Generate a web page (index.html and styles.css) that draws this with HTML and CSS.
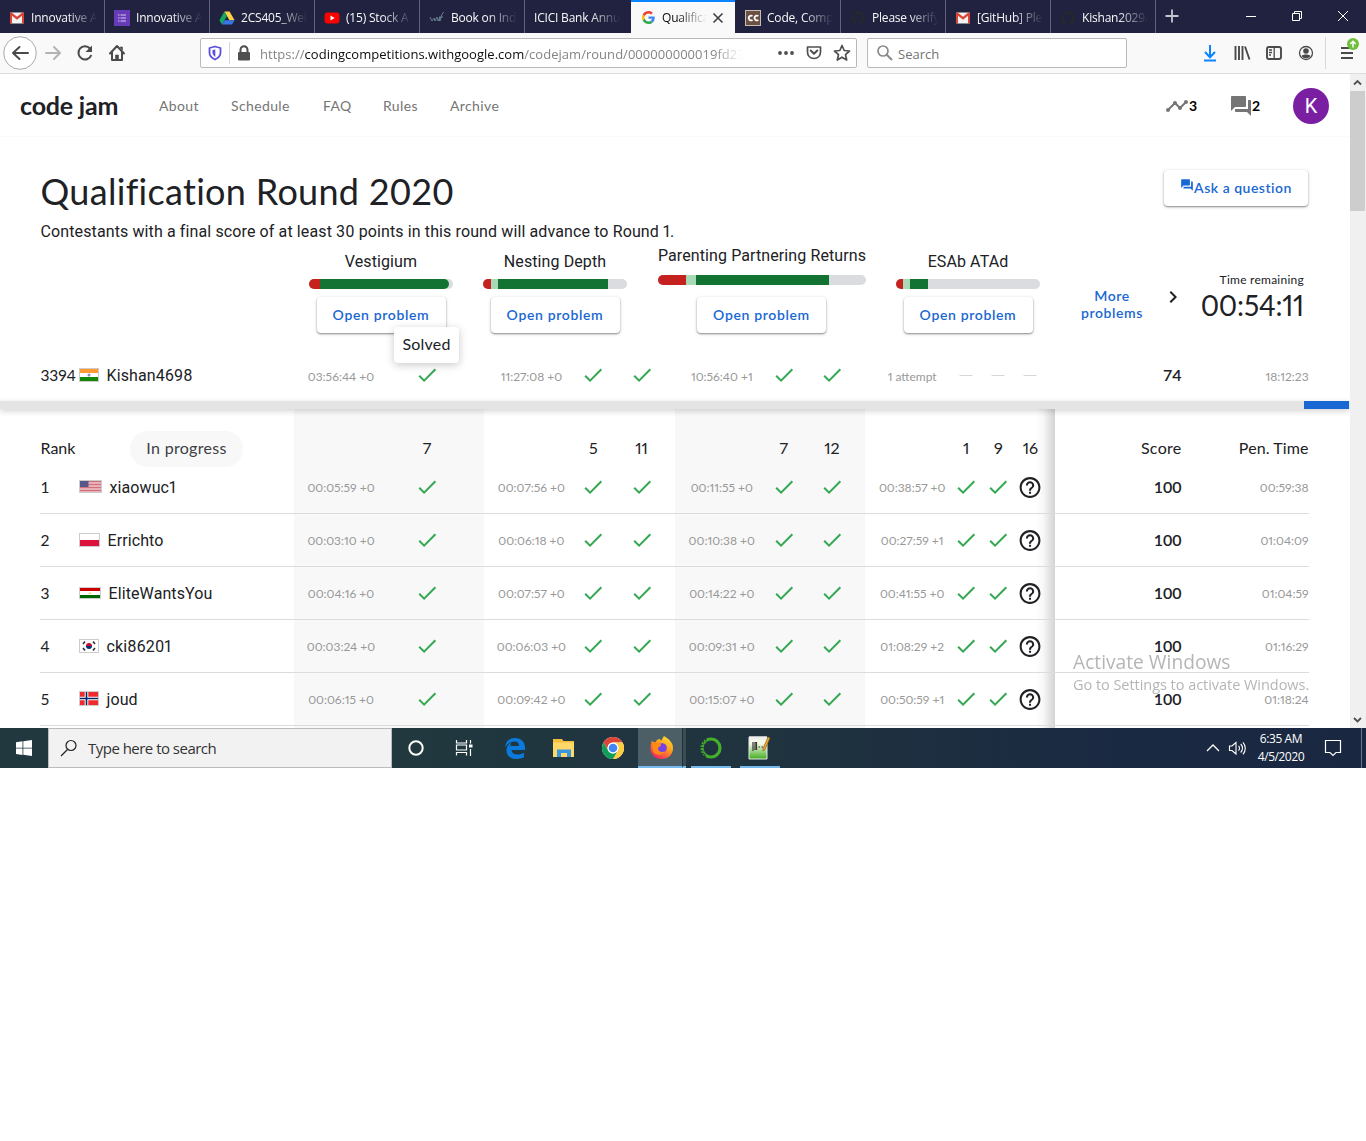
FILE: index.html
```html
<!DOCTYPE html>
<html lang="en">
<head>
<meta charset="utf-8">
<title>Qualification Round 2020 - Code Jam</title>
<link rel="stylesheet" href="styles.css">
</head>
<body>
<svg class="defs" width="0" height="0">
  <linearGradient id="g-fox" x1="0.8" y1="0" x2="0.2" y2="1"><stop offset="0" stop-color="#ffe22e"/><stop offset=".45" stop-color="#ff9a1f"/><stop offset="1" stop-color="#f5156c"/></linearGradient>
  <linearGradient id="g-note" x1="0" y1="0" x2="0" y2="1"><stop offset="0.3" stop-color="#f4f8e8"/><stop offset="1" stop-color="#3fae1d"/></linearGradient>
  <symbol id="check" viewBox="0 0 24 24"><path d="M9 16.17 4.83 12l-1.42 1.41L9 19 21 7l-1.41-1.41z" fill="#34a853"/></symbol>
  <symbol id="dash" viewBox="0 0 24 24"><path d="M5.5 12.500h13" stroke="#d5d7da"/></symbol>
  <symbol id="help" viewBox="0 0 24 24"><path d="M11 18h2v-2h-2v2zm1-16C6.48 2 2 6.48 2 12s4.48 10 10 10 10-4.480 10-10S17.520 2 12 2zm0 18c-4.410 0-8-3.590-8-8s3.590-8 8-8 8 3.590 8 8-3.590 8-8 8zm0-14c-2.210 0-4 1.790-4 4h2c0-1.100.9-2 2-2s2 .9 2 2c0 2-3 1.750-3 5h2c0-2.250 3-2.500 3-5 0-2.210-1.790-4-4-4z" fill="#202124"/></symbol>
  <symbol id="forum" viewBox="0 0 24 24"><path d="M21 6h-2v9H6v2c0 .55.45 1 1 1h11l4 4V7c0-.55-.45-1-1-1zm-4 6V3c0-.55-.45-1-1-1H3c-.55 0-1 .45-1 1v14l4-4h10c.55 0 1-.45 1-1z" fill="currentColor"/></symbol>
  <symbol id="gmail" viewBox="0 0 16 16"><path d="M1.500 2.500h13v11h-13z" fill="#f2f2f2"/><path d="M1 3v10.500h2V5.800l5 4 5-4v7.700h2V3c0-.9-1-1-1.600-.6L8 6.800 2.600 2.400C2 2 1 2.100 1 3z" fill="#db4437"/></symbol>
  <symbol id="github" viewBox="0 0 16 16"><path d="M8 1.300a6.700 6.700 0 0 0-2.100 13c.3 0 .5-.1.500-.4v-1.300c-1.900.4-2.300-.9-2.300-.9-.6-1.500-1.100-1-1.100-1.300.8-.1 1.300.8 1.300.8.7 1 1.700.8 2 .6 0-.5.300-.8.500-1C5.300 10.600 3.700 10 3.700 7.500c0-.7.3-1.300.7-1.800-.1-.2-.3-.9.100-1.800 0 0 .6-.2 1.900.7a6 6 0 0 1 3.300 0c1.300-.9 1.900-.7 1.900-.7.4.9.1 1.600.1 1.800.4.500.7 1.100.7 1.800 0 2.500-1.600 3.100-3.100 3.300.3.200.5.600.5 1.300v1.800c0 .300.1.4.5.4A6.700 6.700 0 0 0 8 1.300z" fill="#24292e"/></symbol>
</svg>

<header class="tabs">
  <div class="tab"><svg width="16" height="16"><use href="#gmail"/></svg><span class="tab-title">Innovative A</span></div>
  <div class="tab"><svg width="16" height="16"><path d="M0 0h16v16H0z" fill="#673ab7"/><path d="M4 5h1.500M4 8h1.500M4 11h1.500M6.500 5H12M6.500 8H12M6.500 11H12" stroke="#d9ccf0" stroke-width="1.200"/></svg><span class="tab-title">Innovative A</span></div>
  <div class="tab"><svg width="16" height="16"><path d="M5.400 1.500h5.200l5 8.700h-5.200z" fill="#ffcf48"/><path d="M5.400 1.500 8 6 3 14.600.4 10.200z" fill="#11a861"/><path d="M5.600 10.200h10L13 14.600H3z" fill="#3777e3"/></svg><span class="tab-title">2CS405_Web</span></div>
  <div class="tab"><svg width="16" height="16"><rect x=".5" y="2.500" width="15" height="11" rx="3" fill="#f00"/><path d="m6.500 5.500 4.200 2.500-4.200 2.500z" fill="#fff"/></svg><span class="tab-title">(15) Stock A</span></div>
  <div class="tab"><svg width="16" height="16"><path d="m1 7 2 4 2-3 1 3 2-4 1 4 2-4-.5 4M11 11l2-7 2-2M10 7h4" fill="none" stroke="#78909c" stroke-width=".8"/></svg><span class="tab-title">Book on Ind</span></div>
  <div class="tab wider"><span class="tab-title">ICICI Bank Annua</span></div>
  <div class="tab active"><svg width="13" height="13" viewBox="0 0 48 48"><path fill="#EA4335" d="M24 9.500c3.540 0 6.710 1.220 9.210 3.600l6.850-6.850C35.900 2.380 30.470 0 24 0 14.620 0 6.510 5.380 2.560 13.220l7.980 6.190C12.430 13.720 17.740 9.500 24 9.500z"/><path fill="#4285F4" d="M46.980 24.550c0-1.570-.15-3.090-.38-4.550H24v9.020h12.940c-.58 2.960-2.260 5.480-4.780 7.180l7.730 6c4.510-4.180 7.090-10.360 7.090-17.650z"/><path fill="#FBBC05" d="M10.530 28.590A14.500 14.500 0 0 1 9.770 24c0-1.600.27-3.140.76-4.590l-7.980-6.190A23.900 23.900 0 0 0 0 24c0 3.880.92 7.540 2.560 10.780z"/><path fill="#34A853" d="M24 48c6.480 0 11.930-2.130 15.890-5.810l-7.730-6c-2.150 1.450-4.920 2.300-8.160 2.300-6.260 0-11.570-4.220-13.470-9.910l-7.980 6.190C6.510 42.620 14.620 48 24 48z"/></svg><span class="tab-title">Qualification</span><svg class="close" width="12" height="12"><path d="m1.500 1.500 9 9m0-9-9 9" stroke="#3a3a3a" stroke-width="1.500"/></svg></div>
  <div class="tab wider after"><svg width="16" height="16"><rect x=".5" y=".5" width="15" height="15" fill="#6b5143" stroke="#c9bcb0"/><path d="M7.500 6a2.400 2.400 0 1 0 0 4M13.300 6a2.400 2.400 0 1 0 0 4" fill="none" stroke="#fff" stroke-width="1.700"/></svg><span class="tab-title">Code, Compi</span></div>
  <div class="tab"><svg width="16" height="16"><use href="#github"/></svg><span class="tab-title">Please verify</span></div>
  <div class="tab"><svg width="16" height="16"><use href="#gmail"/></svg><span class="tab-title">[GitHub] Plea</span></div>
  <div class="tab"><svg width="16" height="16"><use href="#github"/></svg><span class="tab-title">Kishan2029/</span></div>
  <svg class="newtab" width="33" height="33"><path d="M16 9.500v13M9.500 16h13" stroke="#c6c6cf" stroke-width="1.800"/></svg>
  <div class="winbtns">
    <svg width="46" height="33"><path d="M18 16.500h10" stroke="#fff"/></svg>
    <svg width="46" height="33"><path d="M18.500 13.500h7v7h-7zM20.500 13.500v-2h7v7h-2" fill="none" stroke="#fff"/></svg>
    <svg width="46" height="33"><path d="m18 11 10 10m0-10-10 10" stroke="#fff"/></svg>
  </div>
</header>

<div class="toolbar">
  <div class="navbtns">
    <svg width="34" height="34"><circle cx="17" cy="17" r="16.300" fill="#fff" stroke="#a9a9aa"/><path d="M25 17H10m6.500-6L10 17l6.500 6" fill="none" stroke="#4a4a4b" stroke-width="2" stroke-linecap="round" stroke-linejoin="round"/></svg>
    <svg width="32" height="34"><path d="M9 17h14m-6-6 6 6-6 6" fill="none" stroke="#b3b3b4" stroke-width="2" stroke-linecap="round" stroke-linejoin="round"/></svg>
    <svg width="32" height="34"><path d="M21 12.500A6.600 6.600 0 1 0 22.300 19" fill="none" stroke="#4a4a4b" stroke-width="2"/><path d="M23 9.500v6.500h-6.500z" fill="#4a4a4b"/></svg>
    <svg width="32" height="34"><path d="m9 17.500 7-7.500 7 7.500M11 16v8h10v-8" fill="none" stroke="#4a4a4b" stroke-width="2" stroke-linejoin="round" stroke-linecap="round"/><path d="M14.500 24v-5h3v5M19 11h2.500v3z" fill="#4a4a4b" stroke="#4a4a4b" stroke-width=".6"/></svg>
  </div>
  <div class="urlbar">
    <svg width="28" height="24"><path d="M14 5.500 19.500 7v4.500c0 3.300-2.500 5.700-5.500 7-3-1.300-5.500-3.700-5.500-7V7z" fill="none" stroke="#5a4fe0" stroke-width="1.800" stroke-linejoin="round"/><path d="M14.300 8.500 11.500 9v2.500c0 2 1.200 3.300 2.800 4.400z" fill="#5a4fe0"/></svg>
    <i class="sep"></i>
    <svg width="27" height="24"><rect x="8" y="11" width="12" height="8.500" rx="1.200" fill="#4f4f50"/><path d="M10.500 11.500V8.700a3.500 3.500 0 0 1 7 0v2.800" fill="none" stroke="#4f4f50" stroke-width="2"/></svg>
    <div class="url">https://<b>codingcompetitions.withgoogle.com</b>/codejam/round/000000000019fd27</div>
    <svg width="101" height="28"><g fill="#4f4f50"><circle cx="25" cy="14" r="1.900"/><circle cx="31" cy="14" r="1.900"/><circle cx="37" cy="14" r="1.900"/></g><path d="M52.500 8h13v5c0 4-2.800 6.500-6.500 6.500s-6.500-2.500-6.500-6.500z" fill="none" stroke="#4f4f50" stroke-width="1.700" stroke-linejoin="round"/><path d="m55.700 11.500 3.300 3.200 3.300-3.200" fill="none" stroke="#4f4f50" stroke-width="2" stroke-linecap="round" stroke-linejoin="round"/><path d="m87 6.500 2.200 5 5.300.500-4 3.600 1.200 5.400-4.700-2.800-4.700 2.800 1.200-5.400-4-3.600 5.300-.5z" fill="none" stroke="#4f4f50" stroke-width="1.700" stroke-linejoin="round"/></svg>
  </div>
  <div class="searchbar"><svg width="18" height="18"><circle cx="7" cy="7" r="5" fill="none" stroke="#8a8a8b" stroke-width="1.700"/><path d="m10.500 10.500 5.500 5.500" stroke="#8a8a8b" stroke-width="2"/></svg><span>Search</span></div>
  <div class="tools">
    <svg width="32" height="32"><path d="M16 8v12m-5-5 5 5.300L21 15M10 23.500h12" fill="none" stroke="#0a84ff" stroke-width="2"/></svg>
    <svg width="32" height="32"><path d="M9.500 9v14M13 9v14M16.500 9v14M19 9.500l4.500 13" fill="none" stroke="#4a4a4b" stroke-width="1.900"/></svg>
    <svg width="32" height="32"><rect x="9" y="10" width="14" height="12" rx="2" fill="none" stroke="#4a4a4b" stroke-width="1.900"/><path d="M16.200 10v12M11 13h3M11 15.500h3M11 18h2" stroke="#4a4a4b" stroke-width="1.300"/></svg>
    <svg width="32" height="32"><circle cx="16" cy="16" r="6.500" fill="none" stroke="#4a4a4b" stroke-width="1.300"/><circle cx="16" cy="14" r="2.800" fill="#4a4a4b"/><path d="M11.500 19c1-2 8-2 9 0-1.500 3-7.500 3-9 0z" fill="#4a4a4b"/></svg>
    <i class="sep tall"></i>
    <svg width="40" height="34"><path d="M15 12h8M15 17h12M15 22h12" stroke="#4a4a4b" stroke-width="2"/><circle cx="27" cy="8" r="6" fill="#6fbf3c"/><path d="M27 11.500V5.500m-2.700 2.500L27 5.300 29.700 8" fill="none" stroke="#fff" stroke-width="1.500"/></svg>
  </div>
</div>

<div class="viewport">
  <main class="page">
    <nav class="sitenav">
      <a class="logo">code jam</a>
      <a class="n-about">About</a><a class="n-schedule">Schedule</a><a class="n-faq">FAQ</a><a class="n-rules">Rules</a><a class="n-archive">Archive</a>
      <div class="status">
        <svg width="24" height="24" viewBox="0 0 24 24"><path d="M23 8c0 1.100-.9 2-2 2-.18 0-.35-.02-.51-.07l-3.560 3.550c.05.16.07.34.07.52 0 1.100-.9 2-2 2s-2-.9-2-2c0-.18.02-.36.07-.52l-2.550-2.550c-.16.050-.34.070-.52.070s-.36-.02-.52-.07l-4.550 4.560c.05.160.070.330.070.510 0 1.100-.9 2-2 2s-2-.9-2-2 .9-2 2-2c.18 0 .35.020.51.070l4.560-4.550C8.020 9.360 8 9.180 8 9c0-1.100.9-2 2-2s2 .9 2 2c0 .18-.02.36-.07.52l2.550 2.550c.16-.050.34-.070.52-.070s.36.020.52.070l3.550-3.560C19.020 8.350 19 8.180 19 8c0-1.100.9-2 2-2s2 .9 2 2z" fill="#757575"/></svg><b>3</b>
        <svg class="chat" width="24" height="24"><use href="#forum"/></svg><b>2</b>
        <span class="avatar">K</span>
      </div>
    </nav>

    <section class="intro">
      <div>
        <h1>Qualification Round 2020</h1>
        <p>Contestants with a final score of at least 30 points in this round will advance to Round 1.</p>
      </div>
      <button class="btn ask"><svg width="14" height="14"><use href="#forum"/></svg><span>Ask a question</span></button>
    </section>

    <section class="problems">
      <article class="problem"><h2>Vestigium</h2><div class="meter"><i class="bad" style="width:11px"></i><i class="good round" style="width:129px"></i></div><button class="btn">Open problem</button><span class="tip">Solved</span></article>
      <article class="problem"><h2>Nesting Depth</h2><div class="meter"><i class="bad" style="width:8px"></i><i class="part" style="width:7px"></i><i class="good" style="width:110px"></i></div><button class="btn">Open problem</button></article>
      <article class="problem wide"><h2>Parenting Partnering Returns</h2><div class="meter"><i class="bad" style="width:28px"></i><i class="part" style="width:10px"></i><i class="good" style="width:133px"></i></div><button class="btn">Open problem</button></article>
      <article class="problem"><h2>ESAb ATAd</h2><div class="meter"><i class="bad" style="width:7px"></i><i class="part" style="width:7px"></i><i class="good" style="width:18px"></i></div><button class="btn">Open problem</button></article>
      <a class="more">More<br>problems</a>
      <svg class="next" width="24" height="24" viewBox="0 0 24 24"><path d="M10 6 8.590 7.410 13.170 12l-4.580 4.590L10 18l6-6z" fill="#202124"/></svg>
      <div class="clock"><small>Time remaining</small><strong>00:54:11</strong></div>
    </section>

    <div class="row self">
      <div class="who"><span class="rank">3394</span><svg class="flag" width="20" height="14"><path d="M0 0h20v14H0z" fill="#fff"/><path d="M0 0h20v5H0z" fill="#ff9933"/><path d="M0 9h20v5H0z" fill="#138808"/><circle cx="10" cy="7" r="1.500" fill="#8a8ad0"/></svg><span class="name">Kishan4698</span></div>
      <div class="cell"><time>03:56:44 +0</time><svg><use href="#check"/></svg></div>
      <div class="cell"><time>11:27:08 +0</time><svg><use href="#check"/></svg><svg><use href="#check"/></svg></div>
      <div class="cell"><time>10:56:40 +1</time><svg><use href="#check"/></svg><svg><use href="#check"/></svg></div>
      <div class="cell"><time>1 attempt</time><svg><use href="#dash"/></svg><svg><use href="#dash"/></svg><svg><use href="#dash"/></svg></div>
      <b class="score">74</b><time class="pen">18:12:23</time>
    </div>
    <div class="timeline"><i></i></div>

    <section class="board">
      <div class="row head">
        <div class="who"><span class="rank">Rank</span><span class="pill">In progress</span></div>
        <div class="cell"><time></time><span>7</span></div>
        <div class="cell"><time></time><span>5</span><span>11</span></div>
        <div class="cell"><time></time><span>7</span><span>12</span></div>
        <div class="cell"><time></time><span>1</span><span>9</span><span>16</span></div>
        <span class="score">Score</span><span class="pen">Pen. Time</span>
      </div>
      <div class="row">
        <div class="who"><span class="rank">1</span><svg class="flag" width="23" height="13"><path d="M0 0h23v13H0z" fill="#f0c4ca"/><path d="M0 1.500h23M0 4.500h23M0 7.500h23M0 10.500h23" stroke="#d0707c" stroke-width="1.300"/><path d="M0 0h9.500v7H0z" fill="#56588a"/></svg><span class="name">xiaowuc1</span></div>
        <div class="cell"><time>00:05:59 +0</time><svg><use href="#check"/></svg></div>
        <div class="cell"><time>00:07:56 +0</time><svg><use href="#check"/></svg><svg><use href="#check"/></svg></div>
        <div class="cell"><time>00:11:55 +0</time><svg><use href="#check"/></svg><svg><use href="#check"/></svg></div>
        <div class="cell"><time>00:38:57 +0</time><svg><use href="#check"/></svg><svg><use href="#check"/></svg><svg><use href="#help"/></svg></div>
        <b class="score">100</b><time class="pen">00:59:38</time>
      </div>
      <div class="row">
        <div class="who"><span class="rank">2</span><svg class="flag" width="21" height="14"><path d="M0 0h21v14H0z" fill="#fff"/><path d="M0 7h21v7H0z" fill="#dc143c"/></svg><span class="name">Errichto</span></div>
        <div class="cell"><time>00:03:10 +0</time><svg><use href="#check"/></svg></div>
        <div class="cell"><time>00:06:18 +0</time><svg><use href="#check"/></svg><svg><use href="#check"/></svg></div>
        <div class="cell"><time>00:10:38 +0</time><svg><use href="#check"/></svg><svg><use href="#check"/></svg></div>
        <div class="cell"><time>00:27:59 +1</time><svg><use href="#check"/></svg><svg><use href="#check"/></svg><svg><use href="#help"/></svg></div>
        <b class="score">100</b><time class="pen">01:04:09</time>
      </div>
      <div class="row">
        <div class="who"><span class="rank">3</span><svg class="flag" width="22" height="12"><path d="M0 0h22v12H0z" fill="#fff"/><path d="M0 0h22v4H0z" fill="#c00"/><path d="M0 8h22v4H0z" fill="#060"/><path d="M9 7h4l-2-2z" fill="#f8dc75"/></svg><span class="name">EliteWantsYou</span></div>
        <div class="cell"><time>00:04:16 +0</time><svg><use href="#check"/></svg></div>
        <div class="cell"><time>00:07:57 +0</time><svg><use href="#check"/></svg><svg><use href="#check"/></svg></div>
        <div class="cell"><time>00:14:22 +0</time><svg><use href="#check"/></svg><svg><use href="#check"/></svg></div>
        <div class="cell"><time>00:41:55 +0</time><svg><use href="#check"/></svg><svg><use href="#check"/></svg><svg><use href="#help"/></svg></div>
        <b class="score">100</b><time class="pen">01:04:59</time>
      </div>
      <div class="row">
        <div class="who"><span class="rank">4</span><svg class="flag" width="20" height="14"><path d="M0 0h20v14H0z" fill="#fff"/><path d="M7 7a3 3 0 0 1 6 0z" fill="#c60c30"/><path d="M7 7a3 3 0 0 0 6 0z" fill="#003478"/><path d="m4 5 2-2.500M14 2.500 16 5M4 9l2 2.500M14 11.500 16 9" stroke="#333" stroke-width="1.600"/></svg><span class="name">cki86201</span></div>
        <div class="cell"><time>00:03:24 +0</time><svg><use href="#check"/></svg></div>
        <div class="cell"><time>00:06:03 +0</time><svg><use href="#check"/></svg><svg><use href="#check"/></svg></div>
        <div class="cell"><time>00:09:31 +0</time><svg><use href="#check"/></svg><svg><use href="#check"/></svg></div>
        <div class="cell"><time>01:08:29 +2</time><svg><use href="#check"/></svg><svg><use href="#check"/></svg><svg><use href="#help"/></svg></div>
        <b class="score">100</b><time class="pen">01:16:29</time>
      </div>
      <div class="row">
        <div class="who"><span class="rank">5</span><svg class="flag" width="20" height="15"><path d="M0 0h20v15H0z" fill="#ef2b2d"/><path d="M7.500 0v15M0 7.500h20" stroke="#fff" stroke-width="3.600"/><path d="M7.500 0v15M0 7.500h20" stroke="#002868" stroke-width="1.600"/></svg><span class="name">joud</span></div>
        <div class="cell"><time>00:06:15 +0</time><svg><use href="#check"/></svg></div>
        <div class="cell"><time>00:09:42 +0</time><svg><use href="#check"/></svg><svg><use href="#check"/></svg></div>
        <div class="cell"><time>00:15:07 +0</time><svg><use href="#check"/></svg><svg><use href="#check"/></svg></div>
        <div class="cell"><time>00:50:59 +1</time><svg><use href="#check"/></svg><svg><use href="#check"/></svg><svg><use href="#help"/></svg></div>
        <b class="score">100</b><time class="pen">01:18:24</time>
      </div>
    </section>
  </main>
  <aside class="scrollbar">
    <svg width="16" height="17"><path d="m4 10.500 3.500-3.500 3.500 3.500" fill="none" stroke="#505050" stroke-width="1.800"/></svg>
    <i class="thumb"></i>
    <svg width="16" height="17"><path d="m4 7 3.500 3.500L11 7" fill="none" stroke="#505050" stroke-width="1.800"/></svg>
  </aside>
  <div class="watermark"><div class="w1">Activate Windows</div><div class="w2">Go to Settings to activate Windows.</div></div>
</div>

<footer class="taskbar">
  <svg width="48" height="40"><path d="m16 14.300 6.500-1v6.400H16zM23.300 13.200 32 12v7.700h-8.700zM16 20.500h6.500v6.400l-6.500-1zM23.300 20.500H32V28l-8.700-1.200z" fill="#fff"/></svg>
  <div class="tsearch"><svg width="18" height="18"><circle cx="11" cy="6.500" r="5" fill="none" stroke="#222" stroke-width="1.200"/><path d="M7.500 10.500 1 17" stroke="#222" stroke-width="1.300"/></svg><span>Type here to search</span></div>
  <svg width="48" height="40"><circle cx="24" cy="20" r="6.700" fill="none" stroke="#fff" stroke-width="2"/></svg>
  <svg width="49" height="40"><path d="M16.500 12v3h10v-3M16.500 27.500v-3h10v3M16.500 17h10v5h-10z" fill="none" stroke="#fff" stroke-width="1.200"/><path d="M30.500 12v3.500M30.500 21v7" stroke="#fff" stroke-width="1.200"/><path d="M29 16.500h3.500v3H29z" fill="#fff"/></svg>
  <svg width="50" height="40"><path d="M16 19.500C17 12.500 21 10 26 10c6 0 10 4 10 9.500V22H22.500c.3 3 2.500 4.500 6 4.500 2.500 0 4.500-.600 6.500-1.800v4.600c-2.300 1.200-5 1.700-8 1.700-6 0-9.500-3.800-9.500-8.500 0-4 2-6.500 5.500-8.500-1 1-1.500 2.400-1.600 4H30c.2-3-1.500-4.600-4.600-4.600-4 0-7 2.100-9.400 6.100z" fill="#0a7bdc"/></svg>
  <svg width="50" height="40"><path d="M14 11h9l1.500 2H35v16H14z" fill="#f5bd3c"/><path d="M14 14.500h21V29H14z" fill="#ffd968"/><path d="M18 29v-7.500h14V29h-4v-4h-6v4z" fill="#3a96dd"/></svg>
  <svg width="49" height="40"><circle cx="24" cy="20" r="11" fill="#fff"/><path d="M14.470 14.500a11 11 0 0 1 19.060 0H24a5.500 5.500 0 0 0-4.760 8.250z" fill="#db4437"/><path d="M33.530 14.500A11 11 0 0 1 24 31l4.760-8.250A5.500 5.500 0 0 0 24 14.500z" fill="#ffcd40"/><path d="M24 31a11 11 0 0 1-9.530-16.500l4.770 8.250a5.500 5.500 0 0 0 9.520 0z" fill="#0f9d58"/><circle cx="24" cy="20" r="5.400" fill="#fff"/><circle cx="24" cy="20" r="4.300" fill="#4285f4"/></svg>
  <div class="app current"><svg width="44" height="38"><path d="M14 12.500c1 1.500 2 2 3.500 1.700C18.500 12 20 11 22 11l1 2 3-5c5 3 9.500 7 9 13-.5 6-5 10-11.500 10S13 26.500 12.500 21c0-3.500.5-6 1.500-8.500z" fill="url(#g-fox)"/><circle cx="24" cy="20" r="4.800" fill="#7542e5"/><path d="M14 15c4-2 8-1 9 2 0 2-3 1.500-3 3.500 0 3 4 4.500 7 2.500-2 5-10 5-12 0z" fill="#ff8a16"/></svg></div>
  <i class="stack"></i>
  <div class="app run"><svg width="40" height="38"><circle cx="20" cy="20" r="9" fill="none" stroke="#43b02a" stroke-width="3.200"/><path d="M14.500 28.500a10.200 10.200 0 0 1 2-18" fill="none" stroke="#21363f" stroke-width="2" stroke-dasharray="1.500 1.700"/><path d="M14 26.500a8.700 8.700 0 0 1 1.500-13" fill="none" stroke="#21363f" stroke-width="1.200" stroke-dasharray="1 2.500"/></svg></div>
  <div class="app run"><svg width="40" height="38"><path d="M9 9h18v22H9z" fill="url(#g-note)" stroke="#e8e8e8"/><path d="M9 8.500h18v3H9z" fill="#eee"/><path d="M13 14v9M15 22v-7.500h1.500V22M18.500 19h1.500m1.500 0H23" fill="none" stroke="#333" stroke-width="1.200"/><path d="m23 20.500 5-11.500 2 1-5 11.500-2 1.500z" fill="#f0a32c" stroke="#8a5a1a" stroke-width=".6"/></svg></div>
  <div class="tray">
    <svg width="24" height="40"><path d="m6 23 6-6 6 6" fill="none" stroke="#fff" stroke-width="1.300"/></svg>
    <svg width="24" height="40"><path d="M4.500 18v4.500H7l4 3.500V14.500L7 18zM13.500 18a3 3 0 0 1 0 4.500M15.700 16a6 6 0 0 1 0 8.500M18 14.300a9 9 0 0 1 0 12" fill="none" stroke="#fff" stroke-width="1.100"/></svg>
    <div class="when"><span>6:35 AM</span><span>4/5/2020</span></div>
    <svg width="55" height="40"><path d="M14.500 12.500h15v12H25l-3 3-3-3h-4.500z" fill="none" stroke="#fff" stroke-width="1.200"/><path d="M50.500 0v40" stroke="#6b7688"/></svg>
  </div>
</footer>
</body>
</html>
```

FILE: styles.css
```css
* { box-sizing: border-box; }
body { margin: 0; background: #fff; font-family: Roboto, sans-serif; color: #202124; font-variant-numeric: proportional-nums; }
svg { display: block; flex: none; }
.defs { position: absolute; }

/* browser tabs */
.tabs { display: flex; height: 33px; background: #20223f; font: 12px "Open Sans", sans-serif; color: #f9f9fa; }
.tab { width: 105px; height: 33px; flex: none; display: flex; align-items: center; padding: 2px 5px 0 9px; border-right: 1px solid #62637c; overflow: hidden; }
.tab.wider { width: 106px; }
.tab.after { padding-left: 10px; }
.tab svg { margin-right: 6px; }
.tab-title { flex: 1; min-width: 0; overflow: hidden; white-space: nowrap; letter-spacing: -0.2px; -webkit-mask-image: linear-gradient(to left, transparent 2px, #000 32px); mask-image: linear-gradient(to left, transparent 2px, #000 32px); }
.tab.active { width: 104px; background: #f9f9fa; color: #0c0c0d; border: 0; border-top: 2px solid #0a84ff; padding: 0 8px 0 11px; }
.tab.active svg { margin-right: 7px; }
.tab:has(+ .active) { border-right: 0; padding-right: 9px; }
.tab.active .close { margin: 0 3px 0 3px; }
.winbtns { display: flex; margin-left: auto; }

/* browser toolbar */
.toolbar { display: flex; align-items: center; height: 41px; background: #f9f9fa; border-bottom: 1px solid #ddd; font: 13px "Open Sans", sans-serif; }
.navbtns { display: flex; width: 200px; padding-left: 3px; }
.urlbar { display: flex; align-items: center; width: 657px; height: 30px; border: 1px solid #b9b9ba; border-radius: 2px; background: #fff; }
.sep { width: 1px; height: 22px; background: #d7d7db; }
.sep.tall { height: 32px; margin-left: 3px; }
.url { flex: 1; min-width: 0; margin: 2px 13px 0 3px; overflow: hidden; white-space: nowrap; color: #858586; letter-spacing: .03px; -webkit-mask-image: linear-gradient(to left, transparent, #000 28px); mask-image: linear-gradient(to left, transparent, #000 28px); }
.url b { font-weight: 400; color: #0c0c0d; }
.searchbar { display: flex; align-items: center; width: 260px; height: 30px; margin-left: 10px; padding-left: 8px; gap: 4px; border: 1px solid #b9b9ba; border-radius: 2px; background: #fff; color: #737374; }
.searchbar span { margin-top: 2px; }
.tools { display: flex; align-items: center; margin-left: auto; }

/* page */
.viewport { position: relative; display: flex; height: 654px; overflow: hidden; }
.page { width: 1350px; height: 654px; overflow: hidden; }
.sitenav { display: flex; align-items: center; height: 63px; padding: 1px 21px 0 20px; border-bottom: 1px solid #fafafa; font: 14px Lato, sans-serif; color: #757575; letter-spacing: .38px; }
.logo { width: 139px; font-size: 25px; line-height: 30px; font-weight: 700; letter-spacing: -0.2px; color: #202124; margin-top: -1px; }
.n-about { width: 72px; } .n-schedule { width: 92px; } .n-faq { width: 60px; } .n-rules { width: 67px; }
.status { display: flex; align-items: center; margin-left: auto; color: #000; }
.status b { width: 8px; font-size: 14px; letter-spacing: 0; }
.chat { margin: 0 -1px 0 32px; color: #757575; }
.avatar { display: grid; place-items: center; width: 36px; height: 36px; margin-left: 33px; border-radius: 50%; background: #7b1fa2; color: #fff; font: 20px Roboto, sans-serif; letter-spacing: 0; }

.intro { display: flex; justify-content: space-between; height: 109px; padding: 33px 42px 0 40.500px; }
h1 { margin: 0; font: 36px/43px Lato, sans-serif; letter-spacing: .3px; white-space: nowrap; }
p { margin: 9px 0 0; font-size: 16px; line-height: 20px; letter-spacing: .115px; white-space: nowrap; }
.btn { height: 36px; width: 129px; padding: 0 0 1px; border: 0; border-radius: 4px; background: #fff; box-shadow: 0 1px 2px rgba(0,0,0,.42), 0 1px 4px rgba(0,0,0,.1); color: #1967d2; font: 600 14px Lato, sans-serif; letter-spacing: .65px; white-space: nowrap; }
.ask { display: flex; align-items: center; justify-content: center; width: 144px; letter-spacing: .5px; padding-bottom: 2px; }
.ask svg { margin-top: -5px; }

.problems { display: flex; height: 105px; padding-left: 309px; gap: 30px; }
.problem { position: relative; display: flex; flex-direction: column; align-items: center; width: 144px; padding-top: 6px; }
.problem.wide { width: 208px; padding-top: 0; margin-left: 1px; }
.problem h2 { margin: 0; height: 27px; font: 16px/20px Roboto, sans-serif; letter-spacing: .1px; white-space: nowrap; }
.problem.wide h2 { height: 29px; }
.meter { display: flex; width: 100%; height: 10px; border-radius: 5px; overflow: hidden; background: #dadce0; }
.meter i { height: 10px; }
.bad { background: #c5221f; } .part { background: #a8dab5; } .good { background: #137333; }
.good.round { border-radius: 0 5px 5px 0; }
.problem .btn { margin-top: 8px; }
.problem.wide .btn { margin: 12px 1px 0 0; }
.tip { position: absolute; left: 85px; top: 81px; width: 65px; height: 36px; z-index: 2; border-radius: 4px; background: #fff; box-shadow: 0 2px 8px rgba(0,0,0,.22); font: 16px/34px Lato, sans-serif; letter-spacing: .2px; text-align: center; }
.more { width: 64px; margin: 41px 0 0 10px; text-align: center; font: 600 14px/17px Lato, sans-serif; letter-spacing: .6px; color: #1967d2; }
.next { margin: 39px 0 0 -13px; }
.clock { width: 104px; margin: 26px 0 0 -15px; display: flex; flex-direction: column; align-items: flex-end; font-family: Lato, sans-serif; white-space: nowrap; }
.clock small { font-size: 12px; line-height: 16px; letter-spacing: .25px; }
.clock strong { font-size: 28px; font-weight: 400; line-height: 34px; letter-spacing: -0.2px; }

/* standings */
.row { display: flex; align-items: center; height: 53px; margin: 0 41px 0 40px; border-bottom: 1px solid #dadce0; }
.who { display: flex; align-items: center; width: 254px; }
.rank { width: 39px; font: 15.500px Lato, sans-serif; padding-left: .5px; margin-top: -1px; }
.flag { outline: 1px solid #ccc; outline-offset: -1px; margin-top: -1px; }
.name { margin-left: 7.500px; font-size: 16px; letter-spacing: .1px; }
.cell { display: flex; align-items: center; width: 190.400px; padding: 0 9.200px 0 9px; }
.cell > * { flex: 1; min-width: 0; display: flex; justify-content: center; text-align: center; }
.cell > svg { display: block; height: 24px; overflow: visible; }
.cell > svg:has(use[href="#help"]) { height: 25px; }
.cell time { flex: 0 0 76px; color: #999; font: 12px Lato, sans-serif; font-variant-numeric: proportional-nums; white-space: nowrap; }
.score { width: 126px; text-align: right; font: 600 16px Lato, sans-serif; padding-bottom: 2px; }
.pen { width: 127px; text-align: right; color: #999; font: 12px Lato, sans-serif; font-variant-numeric: proportional-nums; }
.self { height: 52px; margin-top: -1px; margin-bottom: -1px; padding-bottom: 2px; border: 0; }
.self .rank { letter-spacing: -0.2px; margin-top: 0; }
.self time { padding-top: 2px; }
.timeline { position: relative; z-index: 1; display: flex; justify-content: flex-end; height: 8px; padding-right: 1px; background: #e4e4e4; box-shadow: 0 2px 6px rgba(0,0,0,.18); }
.timeline i { width: 45px; background: #1967d2; }
.board { background: linear-gradient(to right, transparent 1036px, rgba(0,0,0,.03) 1043px, rgba(0,0,0,.17) 1055px, transparent 1055px), linear-gradient(to right, #fff 294px, #f8f8f8 294px, #f8f8f8 484px, #fff 484px, #fff 675px, #f8f8f8 675px, #f8f8f8 865px, #fff 865px); padding-bottom: 10px; }
.head { height: 52px; border: 0; font: 16px Lato, sans-serif; font-variant-numeric: proportional-nums; padding-top: 25px; }
.head .rank { width: 90px; font-size: 16px; margin-top: 0; }
.head .pill { width: 113px; height: 36px; border-radius: 18px; background: #f8f8f8; line-height: 34px; text-align: center; color: #3c4043; letter-spacing: .3px; margin-top: 2px; }
.head .score { font-weight: 400; letter-spacing: .3px; padding: 0; }
.head .pen { font-size: 16px; color: #202124; letter-spacing: .1px; }
.scrollbar { display: flex; flex-direction: column; width: 16px; background: #f0f0f0; }
.thumb { flex: 0 0 120px; width: 15px; background: #cdcdcd; margin-bottom: auto; }
.watermark { position: absolute; left: 1073px; top: 574px; font-family: "Open Sans", sans-serif; color: #a9a9a9; white-space: nowrap; opacity: .85; }
.w1 { font-size: 19.200px; line-height: 28px; }
.w2 { font-size: 14.500px; line-height: 18px; letter-spacing: -0.04px; }

/* windows taskbar */
.taskbar { display: flex; height: 40px; background: linear-gradient(to right, #21383f 30%, #1f323f 60%, #1a2942 82%, #1a2741); font-family: "Open Sans", sans-serif; color: #fff; }
.tsearch { display: flex; align-items: center; gap: 10px; width: 344px; padding-left: 11px; border: 1px solid #bbb; background: #f2f2f2; color: #333; font-size: 15px; letter-spacing: -0.52px; }
.app { height: 40px; border-bottom: 2px solid #76b9ed; }
.app.current { width: 44px; background: #4d5f66; }
.stack { width: 4px; height: 40px; background: #3a4c54; border-left: 1px solid #222f36; border-bottom: 2px solid #76b9ed; margin-right: 5px; }
.app.run { width: 40px; margin-right: 9px; }
.tray { display: flex; margin-left: auto; }
.when { display: flex; flex-direction: column; align-items: center; width: 62px; padding: 2px 0 0 2px; font-size: 12px; line-height: 18px; letter-spacing: -0.4px; }
```
